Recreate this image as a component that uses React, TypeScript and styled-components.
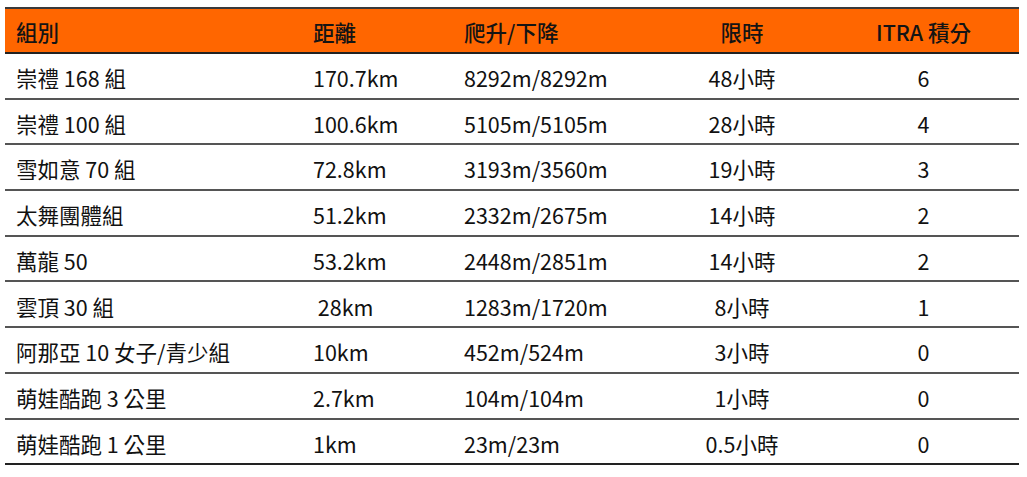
import React from "react";
import styled, { createGlobalStyle } from "styled-components";

const GlobalStyle = createGlobalStyle`
  html, body {
    margin: 0;
    padding: 0;
    background: #ffffff;
  }
  body {
    font-family: "Noto Sans CJK TC", "Noto Sans CJK SC", sans-serif;
    color: #111111;
  }
`;

const Page = styled.div`
  padding: 7px 8px 0 5px;
`;

const Table = styled.table`
  width: 1014px;
  border-collapse: collapse;
  table-layout: fixed;
  font-size: 21.5px;
  line-height: 1;
  border-top: 2px solid #3a3a3a;
  border-bottom: 2px solid #222222;
`;

const HeadRow = styled.tr`
  background: #ff6600;
  height: 45px;
  border-bottom: 2px solid #222222;
`;

const Row = styled.tr`
  height: 45.7px;
  border-bottom: 2px solid #555555;
  &:last-child {
    border-bottom: 2px solid #222222;
  }
`;

const HeadCell = styled.th<{ $center?: boolean }>`
  padding: 2px 0 0 ${(p) => (p.$center ? "0" : "11px")};
  text-align: ${(p) => (p.$center ? "center" : "left")};
  font-weight: 500;
  color: #141414;
`;

const Cell = styled.td<{ $center?: boolean }>`
  padding: 4px 0 0 ${(p) => (p.$center ? "0" : "11px")};
  text-align: ${(p) => (p.$center ? "center" : "left")};
  font-weight: 400;
  white-space: pre;
`;

type Race = {
  name: string;
  distance: string;
  elevation: string;
  limit: string;
  points: string;
};

const races: Race[] = [
  { name: "崇禮 168 組", distance: "170.7km", elevation: "8292m/8292m", limit: "48小時", points: "6" },
  { name: "崇禮 100 組", distance: "100.6km", elevation: "5105m/5105m", limit: "28小時", points: "4" },
  { name: "雪如意 70 組", distance: "72.8km", elevation: "3193m/3560m", limit: "19小時", points: "3" },
  { name: "太舞團體組", distance: "51.2km", elevation: "2332m/2675m", limit: "14小時", points: "2" },
  { name: "萬龍 50", distance: "53.2km", elevation: "2448m/2851m", limit: "14小時", points: "2" },
  { name: "雲頂 30 組", distance: " 28km", elevation: "1283m/1720m", limit: "8小時", points: "1" },
  { name: "阿那亞 10 女子/青少組", distance: "10km", elevation: "452m/524m", limit: "3小時", points: "0" },
  { name: "萌娃酷跑 3 公里", distance: "2.7km", elevation: "104m/104m", limit: "1小時", points: "0" },
  { name: "萌娃酷跑 1 公里", distance: "1km", elevation: "23m/23m", limit: "0.5小時", points: "0" },
];

const App: React.FC = () => {
  return (
    <Page>
      <GlobalStyle />
      <Table>
        <colgroup>
          <col style={{ width: 297 }} />
          <col style={{ width: 151 }} />
          <col style={{ width: 203 }} />
          <col style={{ width: 172 }} />
          <col style={{ width: 191 }} />
        </colgroup>
        <thead>
          <HeadRow>
            <HeadCell>組別</HeadCell>
            <HeadCell>距離</HeadCell>
            <HeadCell>爬升/下降</HeadCell>
            <HeadCell $center>限時</HeadCell>
            <HeadCell $center>ITRA 積分</HeadCell>
          </HeadRow>
        </thead>
        <tbody>
          {races.map((r) => (
            <Row key={r.name}>
              <Cell>{r.name}</Cell>
              <Cell>{r.distance}</Cell>
              <Cell>{r.elevation}</Cell>
              <Cell $center>{r.limit}</Cell>
              <Cell $center>{r.points}</Cell>
            </Row>
          ))}
        </tbody>
      </Table>
    </Page>
  );
};

export default App;
